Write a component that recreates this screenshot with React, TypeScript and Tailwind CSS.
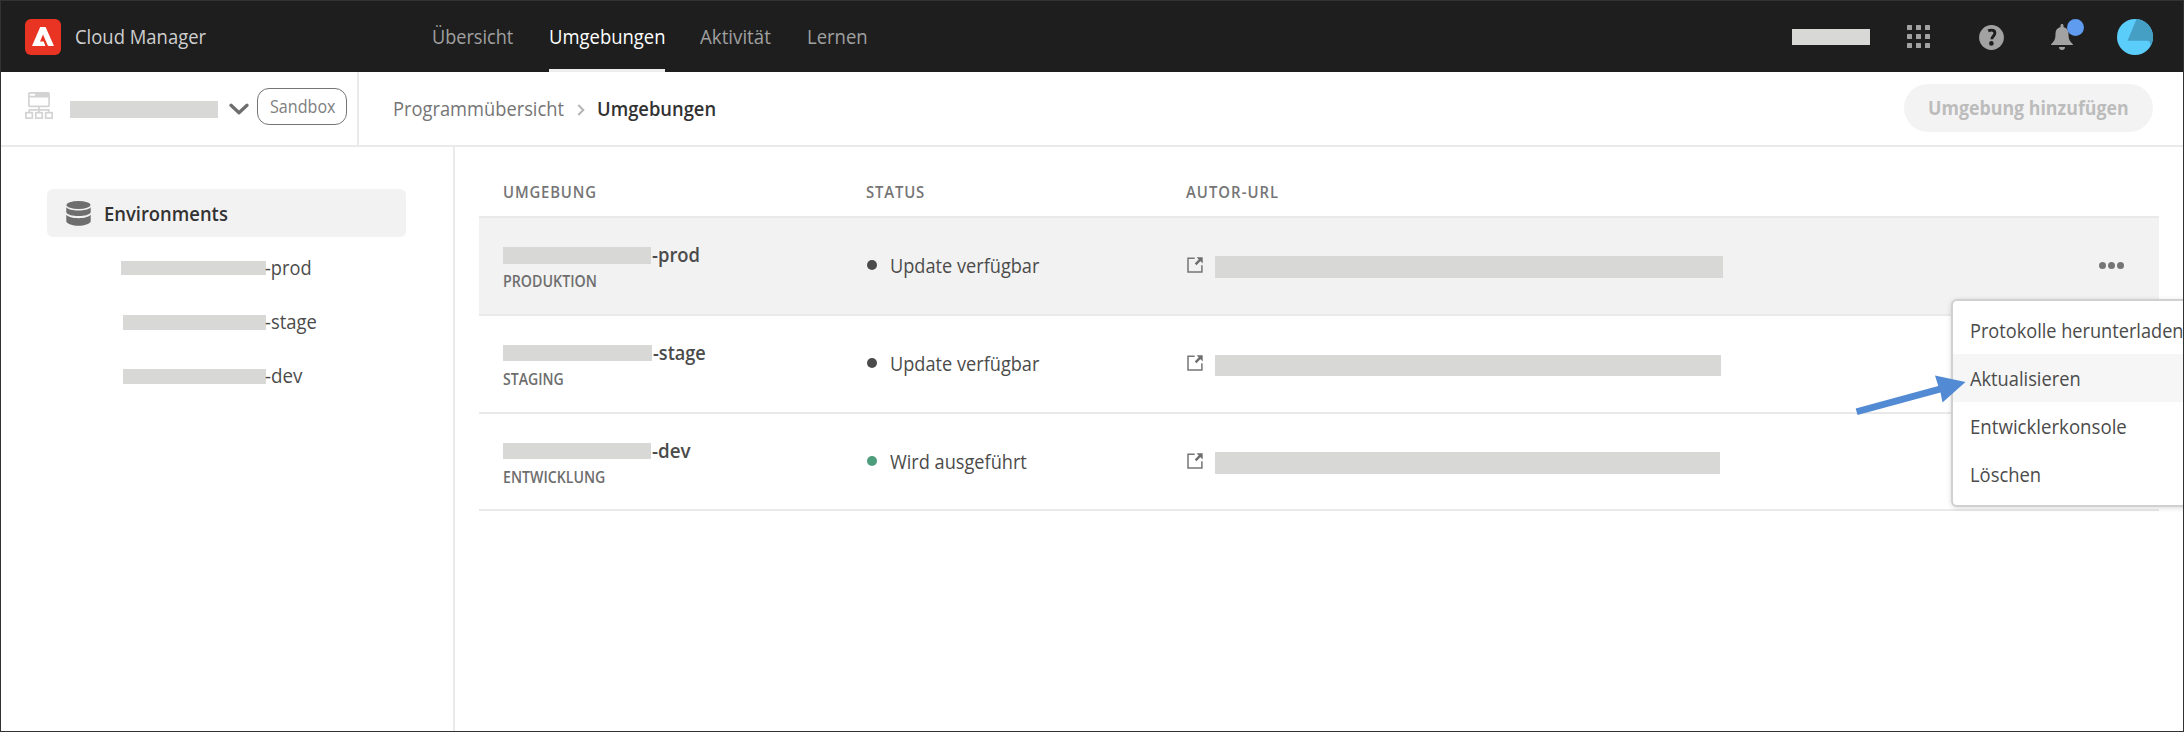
import type { ReactNode } from "react";
import clsx from "clsx";

/* Horizontally condensed text in a box of fixed width */
function Fit({ box, fit, children }: { box: string; fit: string; children: ReactNode }) {
  return (
    <span className={clsx("block shrink-0 whitespace-nowrap", box)}>
      <span className={clsx("inline-block origin-left", fit)}>{children}</span>
    </span>
  );
}

function Logo() {
  return (
    <svg className="size-9 shrink-0" viewBox="0 0 36 36">
      <rect width="36" height="36" rx="6" fill="#e93323" />
      <path d="M15.2 8h5.4L29 27h-5.1a1.3 1.3 0 0 1-1.2-.8L18 15.4l-3 7.1h3.7l1.7 4.5H7z" fill="#fff" />
    </svg>
  );
}

function ProgramIcon() {
  return (
    <svg className="h-[27px] w-7 shrink-0" viewBox="0 0 28 27" fill="none" stroke="#d3d3d3" strokeWidth="1.7">
      <rect x="3.9" y="0.9" width="20.2" height="13.4" rx="0.8" />
      <path d="M10 1h14v4H10z" fill="#d3d3d3" stroke="none" />
      <path d="M4 4.6h20M14 14.3v6.2M4.3 20.5v-2.7h19.4v2.7" />
      <rect x="0.9" y="20.7" width="6.4" height="5.4" />
      <rect x="10.8" y="20.7" width="6.4" height="5.4" />
      <rect x="20.7" y="20.7" width="6.4" height="5.4" />
    </svg>
  );
}

function AppsIcon() {
  return (
    <svg className="size-[23px] shrink-0" viewBox="0 0 23 23" fill="#a2a2a2">
      {[0, 9, 18].map((y) => [0, 9, 18].map((x) => <rect key={`${x}-${y}`} x={x} y={y} width="5" height="5" rx="0.5" />))}
    </svg>
  );
}

function HelpIcon() {
  return (
    <svg className="size-[25px] shrink-0" viewBox="0 0 25 25">
      <circle cx="12.5" cy="12.5" r="12.4" fill="#a2a2a2" />
      <path d="M9.2 5.9c1-.5 2-.8 3.3-.8 2.3 0 3.4 1.3 3.4 3 0 2.9-3.1 3.5-3.1 6.2" fill="none" stroke="#1e1e1e" strokeWidth="2.9" />
      <circle cx="12.4" cy="18.4" r="2.3" fill="#1e1e1e" />
    </svg>
  );
}

function BellIcon() {
  return (
    <span className="relative block h-[26px] w-[22px] shrink-0">
      <svg className="size-full" viewBox="0 0 22 26" fill="#a2a2a2">
        <path d="M11 0c.9 0 1.5.6 1.5 1.5v1.4c3.2.8 5 3.3 5 6.6 0 5.5 1 7.5 3.7 9.9.5.5.8.9.8 1.6H0c0-.7.3-1.1.8-1.6 2.7-2.4 3.7-4.4 3.7-9.9 0-3.3 1.8-5.8 5-6.6V1.5C9.5.6 10.1 0 11 0z" />
        <path d="M8 23h6a3 3 0 0 1-6 0z" />
      </svg>
      <span className="absolute -top-[5px] left-4 size-[17px] rounded-full bg-[#5f9bee]" />
    </span>
  );
}

function Avatar() {
  return (
    <svg className="size-9 shrink-0" viewBox="0 0 36 36">
      <clipPath id="avatar">
        <circle cx="18" cy="18" r="18" />
      </clipPath>
      <g clipPath="url(#avatar)">
        <rect width="36" height="36" fill="#5bcdfb" />
        <path d="M19.5 0H36v27h-2.5c-.2-3.5-1-5.2-3.5-5.2H10.5z" fill="#459fc5" />
      </g>
    </svg>
  );
}

function DatabaseIcon() {
  return (
    <svg className="size-[25px] shrink-0" viewBox="0 0 25 25" fill="#6e6e6e">
      <ellipse cx="12.5" cy="4" rx="12" ry="4" />
      <path d="M.3 6.2c1.8 2.3 6.6 3.3 12.2 3.3s10.4-1 12.2-3.3v5.2c-1.2 2.2-6.2 3.6-12.2 3.6S1.5 13.6.3 11.4z" />
      <path d="M.3 13.8c1.8 2.3 6.6 3.4 12.2 3.4s10.4-1.1 12.2-3.4v6.8c-1.2 2.6-6.2 4.2-12.2 4.2S1.5 23.2.3 20.6z" />
    </svg>
  );
}

function LinkOutIcon() {
  return (
    <svg className="size-4 shrink-0" viewBox="0 0 16 16">
      <path d="M7.7 1.2H1v13.9h13.9V8.2" fill="none" stroke="#757575" strokeWidth="1.5" />
      <path d="M8.6 7.3l4.6-4.7" stroke="#6e6e6e" strokeWidth="2.4" />
      <path d="M9.6.3h6.1v6.1z" fill="#6e6e6e" />
    </svg>
  );
}

const nav = [
  { label: "Übersicht", box: "w-[117px]", fit: "scale-x-[0.905]", active: false },
  { label: "Umgebungen", box: "w-[116px]", fit: "scale-x-[0.922]", active: true },
  { label: "Aktivität", box: "w-[72px]", fit: "scale-x-[0.935]", active: false },
  { label: "Lernen", box: "w-[62px]", fit: "scale-x-[0.925]", active: false },
];

const sideItems = [
  { name: "-prod", bar: "ml-[74px] w-[145px] h-[14px] mt-px", fit: "scale-x-[0.91]" },
  { name: "-stage", bar: "ml-[76px] w-[143px] h-[15px] mt-[3px]", fit: "scale-x-[0.92]" },
  { name: "-dev", bar: "ml-[76px] w-[143px] h-[15px] mt-[3px]", fit: "scale-x-[0.94]" },
];

const rows = [
  {
    name: "-prod", nameFit: "scale-x-[0.92]", bar: "w-[148px] h-[17px] mt-[6px]", kind: "PRODUKTION", kindFit: "scale-x-[0.89]",
    status: "Update verfügbar", statusFit: "scale-x-[0.908]", dot: "bg-[#4b4b4b]", url: "w-[508px] h-[22px] mt-[4px]", row: "h-[98px] bg-[#f2f2f2]", more: true,
  },
  {
    name: "-stage", nameFit: "scale-x-[0.905]", bar: "w-[149px] h-4 mt-[6px]", kind: "STAGING", kindFit: "scale-x-[0.88]",
    status: "Update verfügbar", statusFit: "scale-x-[0.908]", dot: "bg-[#4b4b4b]", url: "w-[506px] h-[21px] mt-[5px]", row: "h-[98px]", more: false,
  },
  {
    name: "-dev", nameFit: "scale-x-[0.94]", bar: "w-[148px] h-4 mt-[6px]", kind: "ENTWICKLUNG", kindFit: "scale-x-[0.885]",
    status: "Wird ausgeführt", statusFit: "scale-x-[0.908]", dot: "bg-[#4b9d7b]", url: "w-[505px] h-[22px] mt-[4px]", row: "h-[97px]", more: false,
  },
];

const menu = [
  { label: "Protokolle herunterladen", fit: "scale-x-[0.908]", on: false },
  { label: "Aktualisieren", fit: "scale-x-[0.912]", on: true },
  { label: "Entwicklerkonsole", fit: "scale-x-[0.932]", on: false },
  { label: "Löschen", fit: "scale-x-[0.92]", on: false },
];

export default function App() {
  return (
    <div className="relative flex h-[732px] w-[2184px] flex-col overflow-hidden border border-[#323232] bg-white font-['Open_Sans',sans-serif] text-[20px] leading-[27px] text-[#4b4b4b]">
      <header className="flex h-[71px] shrink-0 items-center bg-[#1e1e1e] pr-[30px] pl-6">
        <Logo />
        <div className="ml-[14px] w-[357px] text-[#cfcfcf]">
          <Fit box="w-[140px]" fit="scale-x-[0.922]">Cloud Manager</Fit>
        </div>
        <nav className="flex h-full flex-1">
          {nav.map((n) => (
            <div
              key={n.label}
              className={clsx(
                "mr-[35px] flex items-center border-b-[3px] pt-[3px] first:mr-0",
                n.active ? "border-[#eeeeee] font-medium text-white" : "border-transparent text-[#a0a0a0]",
              )}
            >
              <Fit box={n.box} fit={n.fit}>{n.label}</Fit>
            </div>
          ))}
        </nav>
        <span className="h-4 w-[78px] bg-[#d8d8d6]" />
        <div className="ml-[37px] flex items-center">
          <AppsIcon />
          <span className="ml-[49px] mt-px"><HelpIcon /></span>
          <span className="ml-[47px] mt-px"><BellIcon /></span>
          <span className="ml-11"><Avatar /></span>
        </div>
      </header>

      <div className="flex h-[75px] shrink-0 items-stretch border-b-2 border-[#eaeaea]">
        <div className="flex w-[358px] items-start border-r-2 border-[#eaeaea] pt-4 pl-6">
          <div className="mt-1"><ProgramIcon /></div>
          <span className="mt-[13px] ml-[17px] h-[17px] w-[148px] bg-[#d8d8d6]" />
          <svg className="mt-[15px] ml-[11px] h-3 w-5 shrink-0" viewBox="0 0 20 12">
            <path d="M2 2.3l8 7.4 8-7.4" fill="none" stroke="#6e6e6e" strokeWidth="3.3" strokeLinecap="round" strokeLinejoin="round" />
          </svg>
          <span className="ml-2 flex h-[37px] w-[90px] items-center rounded-[12px] border border-[#757575] pl-3 text-[18px] text-[#808080]">
            <Fit box="w-[66px]" fit="scale-x-[0.895]">Sandbox</Fit>
          </span>
        </div>
        <div className="flex flex-1 items-center pl-[34px] text-[#757575]">
          <Fit box="w-[184px]" fit="scale-x-[0.915]">Programmübersicht</Fit>
          <svg className="mt-0.5 h-3 w-2" viewBox="0 0 8 12">
            <path d="M1.3 1l5 5-5 5" fill="none" stroke="#b4b4b4" strokeWidth="2" />
          </svg>
          <div className="ml-3 font-semibold text-[#323232]">
            <Fit box="w-[120px]" fit="scale-x-[0.918]">Umgebungen</Fit>
          </div>
        </div>
        <button className="mt-3 mr-[30px] flex h-12 w-[249px] justify-start rounded-full bg-[#f3f3f3] pt-[10px] pl-6 font-bold text-[#bcbcbc]">
          <Fit box="w-[200px]" fit="scale-x-[0.889]">Umgebung hinzufügen</Fit>
        </button>
      </div>

      <div className="flex min-h-0 flex-1">
        <aside className="w-[454px] shrink-0 border-r-2 border-[#eaeaea] pt-[42px] pl-[46px]">
          <div className="mb-[3px] flex h-12 w-[359px] items-center rounded-md bg-[#f2f2f2] pl-[19px] font-semibold text-[#323232]">
            <DatabaseIcon />
            <div className="ml-[13px]">
              <Fit box="w-[140px]" fit="scale-x-[0.92]">Environments</Fit>
            </div>
          </div>
          {sideItems.map((s) => (
            <div key={s.name} className="flex h-[54px] items-center">
              <span className={clsx("mr-[-1px] shrink-0 bg-[#d8d8d6]", s.bar)} />
              <Fit box="w-[60px]" fit={s.fit}>{s.name}</Fit>
            </div>
          ))}
        </aside>

        <main className="flex-1 pr-6 pl-6">
          <div className="grid h-[71px] grid-cols-[363px_320px_1fr] border-b-2 border-[#e9e9e9] pt-8 pl-6 text-[16px] font-semibold text-[#757575]">
            <Fit box="w-[100px]" fit="scale-x-[0.93] tracking-[0.9px]">UMGEBUNG</Fit>
            <Fit box="w-[100px]" fit="scale-x-[0.93] tracking-[0.9px]">STATUS</Fit>
            <Fit box="w-[100px]" fit="scale-x-[0.93] tracking-[1.1px]">AUTOR-URL</Fit>
          </div>
          {rows.map((r) => (
            <div key={r.name} className={clsx("grid grid-cols-[363px_320px_1fr_60px] border-b-2 border-[#e9e9e9] pl-6", r.row)}>
              <div className="pt-[23px]">
                <div className="flex h-[27px] items-start font-semibold">
                  <span className={clsx("mr-px shrink-0 bg-[#d8d8d6]", r.bar)} />
                  <Fit box="w-[60px]" fit={r.nameFit}>{r.name}</Fit>
                </div>
                <div className="text-[16px] font-semibold text-[#6e6e6e]">
                  <Fit box="w-[110px]" fit={r.kindFit}>{r.kind}</Fit>
                </div>
              </div>
              <div className="flex h-[94px] items-center">
                <span className={clsx("ml-px size-[10px] rounded-full", r.dot)} />
                <div className="ml-[13px]">
                  <Fit box="w-[160px]" fit={r.statusFit}>{r.status}</Fit>
                </div>
              </div>
              <div className="flex h-[94px] items-center pl-px">
                <LinkOutIcon />
                <span className={clsx("ml-3 bg-[#d8d8d6]", r.url)} />
              </div>
              {r.more && (
                <div className="flex h-[95px] items-center gap-[2px]">
                  {[0, 1, 2].map((i) => <span key={i} className="size-[7px] rounded-full bg-[#757575]" />)}
                </div>
              )}
            </div>
          ))}
        </main>
      </div>

      <div className="absolute top-[298px] left-[1950px] h-[208px] w-[260px] rounded-md border-2 border-[#d0d0d0] bg-white pt-[5px] shadow-[0_1px_5px_rgba(0,0,0,0.15)]">
        {menu.map((m) => (
          <div key={m.label} className={clsx("flex h-12 items-center pl-[17px]", m.on && "bg-[#f6f6f6]")}>
            <Fit box="w-[220px]" fit={m.fit}>{m.label}</Fit>
          </div>
        ))}
      </div>
      <svg className="absolute top-[370px] left-[1850px] h-[50px] w-[120px]" viewBox="1851 371 120 50">
        <path d="M1965.5 382L1942.5 402.5 1940.5 392.5 1857.5 415 1855.7 408.5 1938.3 386 1935 375.5z" fill="#528bd4" />
      </svg>
    </div>
  );
}
